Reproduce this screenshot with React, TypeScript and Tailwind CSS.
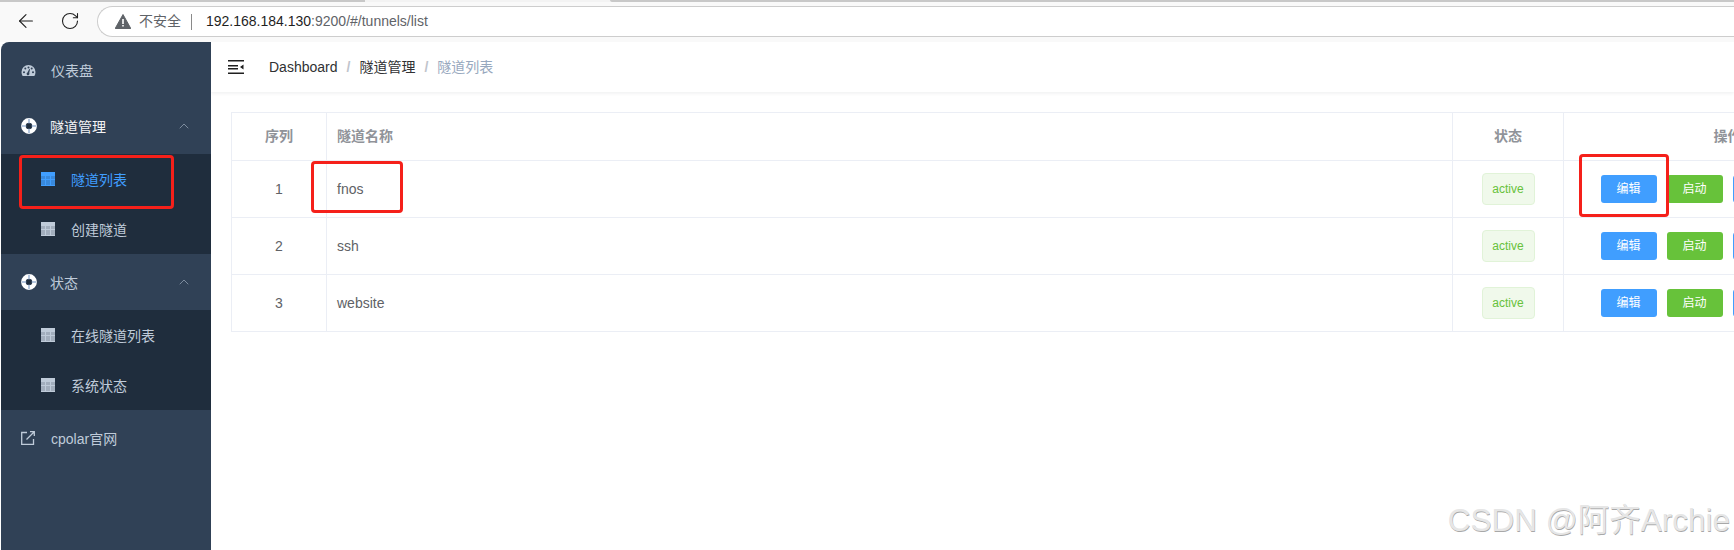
import { ArrowLeft, ChevronUp, RotateCw } from "lucide-react";

const font = "font-['Liberation_Sans','Noto_Sans_CJK_SC',sans-serif]";

const GaugeIcon = () => (
  <svg viewBox="0 0 14 11" className="h-[11px] w-[15px] shrink-0 fill-current">
    <path
      fillRule="evenodd"
      d="M7 0a7 7 0 0 1 7 7c0 1.500-.4 2.900-1.100 4H1.100A7.600 7.600 0 0 1 0 7a7 7 0 0 1 7-7Zm-4.500 6.200a1 1 0 1 0 0 2 1 1 0 0 0 0-2Zm9 0a1 1 0 1 0 0 2 1 1 0 0 0 0-2ZM3.800 2.500a1 1 0 1 0 0 2 1 1 0 0 0 0-2Zm6.400 0a1 1 0 1 0 0 2 1 1 0 0 0 0-2ZM7 1.400a1 1 0 1 0 0 2 1 1 0 0 0 0-2Zm.5 3L6 7.600a1.400 1.400 0 1 0 1.700.5l.8-3.500a.5.5 0 0 0-1-.2Z"
    />
  </svg>
);

const BuoyIcon = () => (
  <svg viewBox="0 0 16 16" className="h-4 w-4 shrink-0">
    <circle cx="8" cy="8" r="5.600" fill="none" stroke="#ffffff" strokeWidth="4.600" />
    <path
      d="M8 0.800v4.600M8 10.600v4.600M0.800 8h4.600M10.600 8h4.600"
      stroke="#9fb6d6"
      strokeWidth="1.500"
      fill="none"
    />
    <circle cx="8" cy="8" r="2.600" fill="#1f2d3d" />
  </svg>
);

const TableIcon = () => (
  <svg viewBox="0 0 14 14" className="h-3.5 w-3.5 shrink-0 fill-current">
    <path
      fillRule="evenodd"
      d="M0 0h14v14H0V0Zm0 4v3h4V4H0Zm5 0v3h4V4H5Zm5 0v3h4V4h-4ZM0 8v5h4V8H0Zm5 0v5h4V8H5Zm5 0v5h4V8h-4Z"
    />
    <path d="M0 4h4v3H0zM5 4h4v3H5zM10 4h4v3h-4zM0 8h4v5H0zM5 8h4v5H5zM10 8h4v5h-4z" opacity=".82" />
  </svg>
);

const LinkIcon = () => (
  <svg viewBox="0 0 14 14" className="h-3.5 w-3.5 shrink-0 fill-none stroke-current" strokeWidth="1.300">
    <path d="M6 1.500H.7v11.800h11.800V8" />
    <path d="M5.500 8.500 13 1M9 .7h4.300V5" />
  </svg>
);

const HamburgerIcon = () => (
  <svg viewBox="0 0 16 14" className="h-3.5 w-4 shrink-0 fill-[#1f1f1f]">
    <path d="M0 0h16v1.500H0zM0 5h10v1.500H0zM0 8h10v1.500H0zM0 12.500h16V14H0zM12 7l3.500-2.500v5z" />
  </svg>
);

const WarnIcon = () => (
  <svg viewBox="0 0 16 15" className="h-[15px] w-4 shrink-0">
    <path d="M8 .5 15.800 14.500H.2L8 .5Z" fill="#5f6368" stroke="#5f6368" strokeLinejoin="round" />
    <path d="M7.200 5h1.600v5H7.200zM7.200 11h1.600v1.600H7.200z" fill="#ffffff" />
  </svg>
);

type SubItemProps = { label: string; active?: boolean };

const SubItem = ({ label, active }: SubItemProps) => (
  <div
    className={`flex h-[50px] items-center gap-[16px] pl-[40px] text-[14px] ${
      active ? "text-[#409eff]" : "text-[#bfcbd9]"
    }`}
  >
    <TableIcon />
    <span className="pt-[2px]">{label}</span>
  </div>
);

const GroupHeader = ({ label, open }: { label: string; open?: boolean }) => (
  <div
    className={`flex h-[56px] items-center pl-[20px] pr-[19px] text-[14px] ${
      open ? "text-[#f4f4f5]" : "text-[#bfcbd9]"
    }`}
  >
    <BuoyIcon />
    <span className="ml-[13px] flex-1 pt-[2px]">{label}</span>
    <ChevronUp className="h-4 w-4 text-[#7d8c9e]" strokeWidth={1.500} />
  </div>
);

const Sidebar = () => (
  <aside className="ml-px w-[210px] shrink-0 rounded-tl-[8px] bg-[#304156]">
    <div className="flex h-[56px] items-center gap-[15px] pl-[20px] text-[14px] text-[#bfcbd9]">
      <GaugeIcon />
      <span className="pt-[2px]">仪表盘</span>
    </div>
    <GroupHeader label="隧道管理" open />
    <div className="bg-[#1f2d3d]">
      <SubItem label="隧道列表" active />
      <SubItem label="创建隧道" />
    </div>
    <GroupHeader label="状态" />
    <div className="bg-[#1f2d3d]">
      <SubItem label="在线隧道列表" />
      <SubItem label="系统状态" />
    </div>
    <div className="flex h-[56px] items-center gap-[16px] pl-[20px] text-[14px] text-[#bfcbd9]">
      <LinkIcon />
      <span className="pt-[2px]">cpolar官网</span>
    </div>
  </aside>
);

const tunnels = [
  { id: 1, name: "fnos" },
  { id: 2, name: "ssh" },
  { id: 3, name: "website" },
];

const actionBtn = "flex h-[28px] w-[56px] shrink-0 items-center justify-center rounded-[3px] text-[12px]";

const TunnelTable = () => (
  <table className="w-[1660px] table-fixed border-collapse text-[14px] text-[#606266]">
    <colgroup>
      <col className="w-[95px]" />
      <col className="w-[1126px]" />
      <col className="w-[111px]" />
      <col className="w-[328px]" />
    </colgroup>
    <thead>
      <tr className="h-[48px] font-bold text-[#909399]">
        <th className="border border-[#ebeef5] text-center">序列</th>
        <th className="border border-[#ebeef5] pl-[10px] text-left">隧道名称</th>
        <th className="border border-[#ebeef5] text-center">状态</th>
        <th className="border border-[#ebeef5] text-center">操作</th>
      </tr>
    </thead>
    <tbody>
      {tunnels.map((t) => (
        <tr key={t.id} className="h-[57px]">
          <td className="border border-[#ebeef5] text-center">{t.id}</td>
          <td className="border border-[#ebeef5] pl-[10px]">{t.name}</td>
          <td className="border border-[#ebeef5] text-center">
            <span className="inline-flex h-[32px] w-[53px] items-center justify-center rounded-[4px] border border-[#e1f3d8] bg-[#f0f9eb] text-[12px] text-[#67c23a]">
              active
            </span>
          </td>
          <td className="border border-[#ebeef5]">
            <div className="flex justify-center gap-[10px]">
              <button className={`${actionBtn} bg-[#409eff] text-white`}>编辑</button>
              <button className={`${actionBtn} bg-[#67c23a] text-white`}>启动</button>
              <button className={`${actionBtn} border border-[#409eff] bg-[#ecf5ff]`} />
              <button className={`${actionBtn} bg-[#f56c6c]`} />
            </div>
          </td>
        </tr>
      ))}
    </tbody>
  </table>
);

const redBox = "pointer-events-none absolute rounded-[4px] border-[3px] border-[#f5201a]";

export default function App() {
  return (
    <div className={`relative h-[550px] w-[1734px] overflow-hidden bg-white ${font}`}>
      {/* browser chrome */}
      <div className="h-[42px] bg-[#f9f9f9]">
        <div className="flex h-[2px]">
          <div className="w-[365px] bg-[#c8c8c8]" />
          <div className="w-[245px] bg-[#f3f3f3]" />
          <div className="flex-1 rounded-bl-[2px] bg-[#c8c8c8]" />
        </div>
        <div className="flex h-[40px] items-start pl-[15px] pt-[4px]">
          <div className="mt-[4px] flex w-[82px] items-center gap-[23px] text-[#1f1f1f]">
            <ArrowLeft className="h-[22px] w-[22px]" strokeWidth={1.200} />
            <RotateCw className="h-[20px] w-[20px]" strokeWidth={1.300} />
          </div>
          <div className="flex h-[31px] flex-1 items-center rounded-l-full border border-r-0 border-[#cdcdcd] bg-white pl-[17px] text-[14px]">
            <WarnIcon />
            <span className="ml-[8px] text-[#5f6368]">不安全</span>
            <span className="ml-[10px] h-[16px] w-px bg-[#8a8a8a]" />
            <span className="ml-[14px] text-[#1f1f1f]">
              192.168.184.130<span className="text-[#5f6368]">:9200/#/tunnels/list</span>
            </span>
          </div>
        </div>
      </div>

      <div className="flex h-[508px]">
        <Sidebar />
        <main className="min-w-0 flex-1 overflow-hidden">
          <div className="flex h-[50px] items-center pl-[17px] shadow-[0_1px_4px_rgba(0,21,41,0.08)]">
            <HamburgerIcon />
            <nav className="ml-[25px] flex items-center text-[14px]">
              <span className="text-[#303133]">Dashboard</span>
              <span className="mx-[9px] font-bold text-[#c0c4cc]">/</span>
              <span className="text-[#303133]">隧道管理</span>
              <span className="mx-[9px] font-bold text-[#c0c4cc]">/</span>
              <span className="text-[#97a8be]">隧道列表</span>
            </nav>
          </div>
          <div className="pl-[20px] pt-[20px]">
            <TunnelTable />
          </div>
        </main>
      </div>

      {/* annotations drawn over the screenshot */}
      <div className={`${redBox} left-[19px] top-[155px] h-[54px] w-[155px]`} />
      <div className={`${redBox} left-[311px] top-[161px] h-[52px] w-[92px]`} />
      <div className={`${redBox} left-[1579px] top-[154px] h-[63px] w-[90px]`} />

      <div className="pointer-events-none absolute right-[4px] top-[500px] text-[31.500px] leading-[40px] text-[#e6e6e6] [text-shadow:0.5px_0.5px_0.5px_#a8a8a8]">
        CSDN @阿齐Archie
      </div>
    </div>
  );
}
